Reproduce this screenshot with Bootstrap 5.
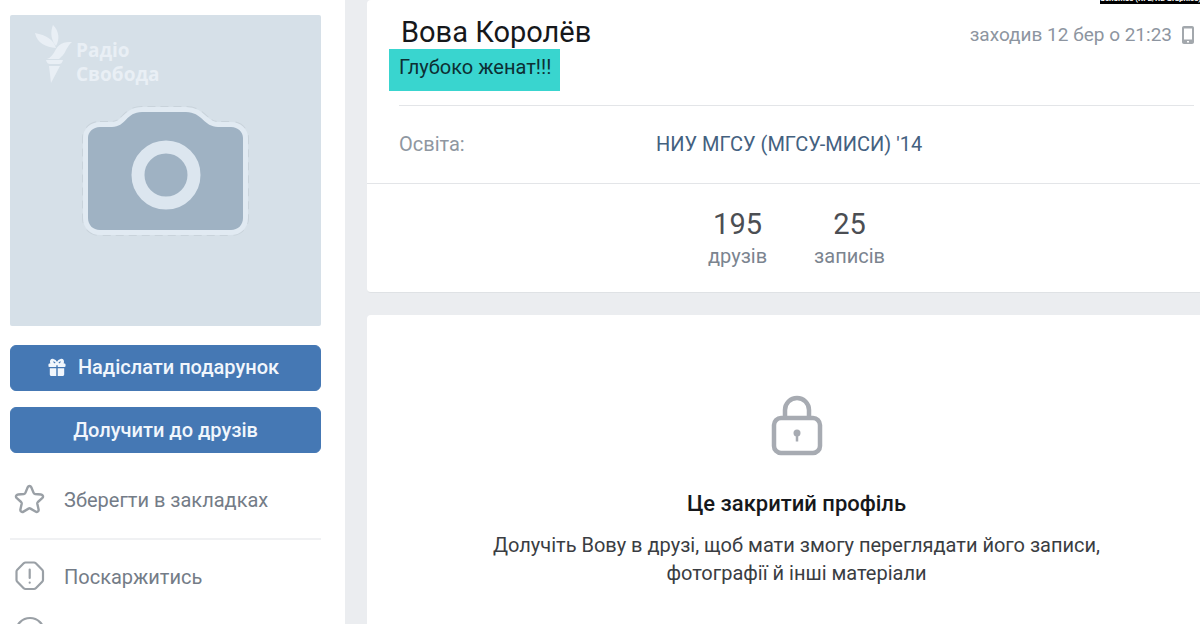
<!DOCTYPE html>
<html lang="uk">
<head>
<meta charset="utf-8">
<meta name="viewport" content="width=device-width, initial-scale=1">
<title>Вова Королёв</title>
<link href="https://cdn.jsdelivr.net/npm/bootstrap@5.3.0/dist/css/bootstrap.min.css" rel="stylesheet">
<style>
body { background: #ebedf0; font-family: Roboto, "Noto Sans", sans-serif; font-size: 20px; line-height: 28px; color: #3a3d42; }
.profile-page { column-gap: 22px; height: 100vh; overflow: hidden; }
.side-panel { flex: 0 0 345px; padding: 15px 24px 0 10px; }
.avatar { aspect-ratio: 1; background: #d6e0e8; border-radius: 2px; }
.avatar-camera { width: 100%; height: 100%; display: block; }
.watermark { position: absolute; left: 24px; top: 9px; color: #e9eff5; gap: 4px; font: 700 19px/24px "Open Sans", sans-serif; }
.watermark-text { padding-top: 14px; }
.vk-btn { --bs-btn-bg: #4578b4; --bs-btn-border-color: #4578b4; --bs-btn-hover-bg: #3d6ea8; --bs-btn-border-radius: 6px; --bs-btn-font-size: 20px; --bs-btn-font-weight: 500; --bs-btn-line-height: 28px; --bs-btn-padding-y: 8px; --bs-btn-color: #f1f6fc; }
.gift-btn { gap: 12px; padding: 7px 16px 9px 12px; }
.side-buttons { margin-top: 19px; gap: 16px; }
.side-links { margin-top: 9px; }
.side-link { height: 76px; gap: 16px; color: #747c87; text-decoration: none; }
.side-link + .side-link { border-top: 2px solid #f0f1f3; }
.side-link svg { flex: none; margin-left: 4px; }
.side-more { display: block; padding-left: 4px; }
.side-more svg { display: block; }
.main-col { min-width: 0; }
.profile-panel { background: #fff; border-radius: 4px 0 0 4px; border-bottom: 1px solid #dfe2e5; }
.profile-head { margin: 0 6px 0 32px; height: 106px; border-bottom: 1px solid #e3e5e8; padding-top: 16px; }
.profile-name { font-size: 29px; line-height: 33px; font-weight: 400; color: #16181b; padding-left: 2px; }
.status-mark { background: #39d5cf; color: #0d2f33; padding: 4px 9px 10px 10px; margin-left: -10px; display: inline-block; }
.last-seen { font-size: 19px; color: #8d95a0; margin-top: 5px; gap: 10px; }
.info-row { padding: 24px 6px 0 32px; height: 78px; border-bottom: 1px solid #e3e5e8; }
.info-label { width: 257px; color: #8f97a1; }
.info-row a { color: #44617f; text-decoration: none; }
.counters { padding: 22px 0 22px 26px; gap: 47px; }
.counters a { color: #7b848f; text-decoration: none; text-align: center; }
.counters strong { display: block; font-size: 29px; line-height: 36px; font-weight: 400; color: #4b4e53; }
.locked-panel { background: #fff; border-radius: 4px 0 0 0; margin-top: 22px; padding: 80px 0 0 26px; }
.locked-title { font-size: 22px; line-height: 30px; font-weight: 500; color: #16181b; margin: 32px 0 12px; }
.locked-text { max-width: 660px; }
.credit { position: absolute; right: 0; top: 0; width: 100px; height: 4px; overflow: hidden; background: #000; color: #fff; font-size: 8px; line-height: 10px; font-weight: 700; text-align: center; white-space: nowrap; }
.credit span { display: block; margin-top: -6px; }
</style>
</head>
<body>
<div class="profile-page d-flex position-relative">
  <aside class="side-panel bg-white">
    <div class="avatar position-relative">
      <svg class="avatar-camera" viewBox="0 0 311 311" aria-hidden="true">
        <defs><path id="camera-body" d="M90 112h12c14 0 14-15 30-15h44c16 0 18 15 32 15h13c7 0 12 5 12 11v80c0 7-5 12-12 12H90c-7 0-12-5-12-12v-80c0-6 5-11 12-11z"/></defs>
        <use href="#camera-body" fill="none" stroke="#c9d3db" stroke-width="12" stroke-dasharray="8 5"/>
        <use href="#camera-body" fill="none" stroke="#e1eaf2" stroke-width="10" stroke-linejoin="round"/>
        <use href="#camera-body" fill="#9fb2c3"/>
        <circle cx="156" cy="160" r="28" fill="none" stroke="#dce6ef" stroke-width="13"/>
      </svg>
      <div class="watermark d-flex align-items-start">
        <svg width="38" height="60" viewBox="0 0 38 60" fill="currentColor" aria-hidden="true">
          <path d="M19 1c6 6 7 14 3 21-5-6-6-14-3-21zM1 9c11 2 19 7 21 15-10-1-19-5-21-15zM38 18c-3 2-4 5-6 8-2 5-5 7-7 9H13c7-2 8-12 14-15 4-2 7-2 11-2zM12 36h17c-1 3-2 4-4 4h-9c-2 0-3-1-4-4zM15 42h11l-9 17z"/>
        </svg>
        <div class="watermark-text">Радіо<br>Свобода</div>
      </div>
    </div>
    <div class="side-buttons d-grid">
      <button type="button" class="btn vk-btn gift-btn d-flex align-items-center justify-content-center">
        <svg width="18" height="20" viewBox="2 0 20 20" fill="currentColor" aria-hidden="true">
          <path d="M4.500 6C3.500 3 5 .5 8 1c2 .3 3.200 1.800 4 3.200C12.800 2.800 14 1.300 16 1c3-.5 4.500 2 3.500 5h.5c1 0 1.500.5 1.500 1.500V9c0 .6-.5 1-1 1h-7.700V8h-1.600v2H3.500c-.5 0-1-.4-1-1V7.500C2.500 6.500 3 6 4 6zM4 11.500h7.200V20H6c-1.300 0-2-.7-2-2zM12.800 11.500H20V18c0 1.300-.7 2-2 2h-5.200z"/>
          <path d="M8 4l2 1.500M16 4l-2 1.500" stroke="#4578b4" stroke-width="1.200"/>
        </svg>
        Надіслати подарунок
      </button>
      <button type="button" class="btn vk-btn">Долучити до друзів</button>
    </div>
    <nav class="side-links">
      <a href="#" class="side-link d-flex align-items-center">
        <svg width="34" height="34" viewBox="0 0 34 34" fill="none" stroke="#9aa0a6" stroke-width="2.400" stroke-linejoin="round" aria-hidden="true"><path d="M13.700 4.300c.8-1.800 2.800-1.800 3.600 0l2.300 5.600c.3.700.8 1 1.500 1.100l5.900.5c2 .2 2.700 2.400 1.200 3.700l-4.300 3.800c-.5.500-.7 1-.6 1.700l1.300 5.700c.4 1.900-1.500 3.200-3.100 2.200l-5-3c-.7-.4-1.300-.4-2 0l-5 3c-1.600 1-3.500-.3-3.100-2.200l1.300-5.700c.1-.7-.1-1.200-.6-1.700l-4.300-3.800c-1.500-1.300-.8-3.500 1.200-3.700l5.900-.5c.7-.1 1.200-.4 1.500-1.100z"/></svg>
        <span>Зберегти в закладках</span>
      </a>
      <a href="#" class="side-link d-flex align-items-center">
        <svg width="34" height="34" viewBox="0 0 34 34" fill="none" stroke="#9aa0a6" stroke-width="2.200" stroke-linejoin="round" stroke-linecap="round" aria-hidden="true"><path d="M11.500 2.500h8.500q1 0 1.800.8l6.400 6.400q.8.800.8 1.800V20q0 1-.8 1.800l-6.400 6.400q-.8.800-1.800.8h-8.500q-1 0-1.800-.8l-6.400-6.400q-.8-.8-.8-1.800v-8.500q0-1 .8-1.800l6.400-6.400q.8-.8 1.800-.8z"/><path d="M15.700 9.500v8.500M15.700 22.500v.2"/></svg>
        <span>Поскаржитись</span>
      </a>
      <a href="#" class="side-more" aria-label="Ще"><svg width="34" height="34" viewBox="0 0 34 34" fill="none" stroke="#9aa0a6" stroke-width="2.200" aria-hidden="true"><circle cx="16" cy="18" r="14"/></svg></a>
    </nav>
  </aside>
  <main class="main-col flex-grow-1 d-flex flex-column">
    <section class="profile-panel">
      <header class="profile-head d-flex justify-content-between align-items-start">
        <div>
          <h1 class="profile-name mb-0">Вова Королёв</h1>
          <div class="status-mark">Глубоко женат!!!</div>
        </div>
        <div class="last-seen d-flex align-items-center">
          <span>заходив 12 бер о 21:23</span>
          <svg width="12" height="18" viewBox="0 0 12 18" aria-hidden="true"><path fill="#a3a8ad" fill-rule="evenodd" d="M2 0h8c1.200 0 2 .8 2 2v14c0 1.200-.8 2-2 2H2c-1.200 0-2-.8-2-2V2C0 .8.800 0 2 0zm0 2.500v11h8v-11zm3 12.500v1.500h2V15z"/></svg>
        </div>
      </header>
      <div class="info-row d-flex">
        <div class="info-label">Освіта:</div>
        <a href="#">НИУ МГСУ (МГСУ-МИСИ) '14</a>
      </div>
      <div class="counters d-flex justify-content-center">
        <a href="#"><strong>195</strong>друзів</a>
        <a href="#"><strong>25</strong>записів</a>
      </div>
    </section>
    <section class="locked-panel flex-grow-1 text-center">
      <svg width="52" height="62" viewBox="0 0 52 62" fill="none" stroke="#a7abb2" stroke-width="4.500" aria-hidden="true"><path d="M14 23V15a12 12 0 0 1 24 0v8"/><rect x="3" y="23" width="46" height="35" rx="7"/><circle cx="26" cy="38" r="3.500" fill="#a7abb2" stroke="none"/><path d="M26 38v8.500" stroke-width="2.500"/></svg>
      <h2 class="locked-title">Це закритий профіль</h2>
      <p class="locked-text mx-auto mb-0">Долучіть Вову в друзі, щоб мати змогу переглядати його записи, фотографії й інші матеріали</p>
    </section>
  </main>
  <div class="credit"><span>Schemes (RFE/RL Graphics)</span></div>
</div>
<script src="https://cdn.jsdelivr.net/npm/bootstrap@5.3.0/dist/js/bootstrap.bundle.min.js"></script>
</body>
</html>
